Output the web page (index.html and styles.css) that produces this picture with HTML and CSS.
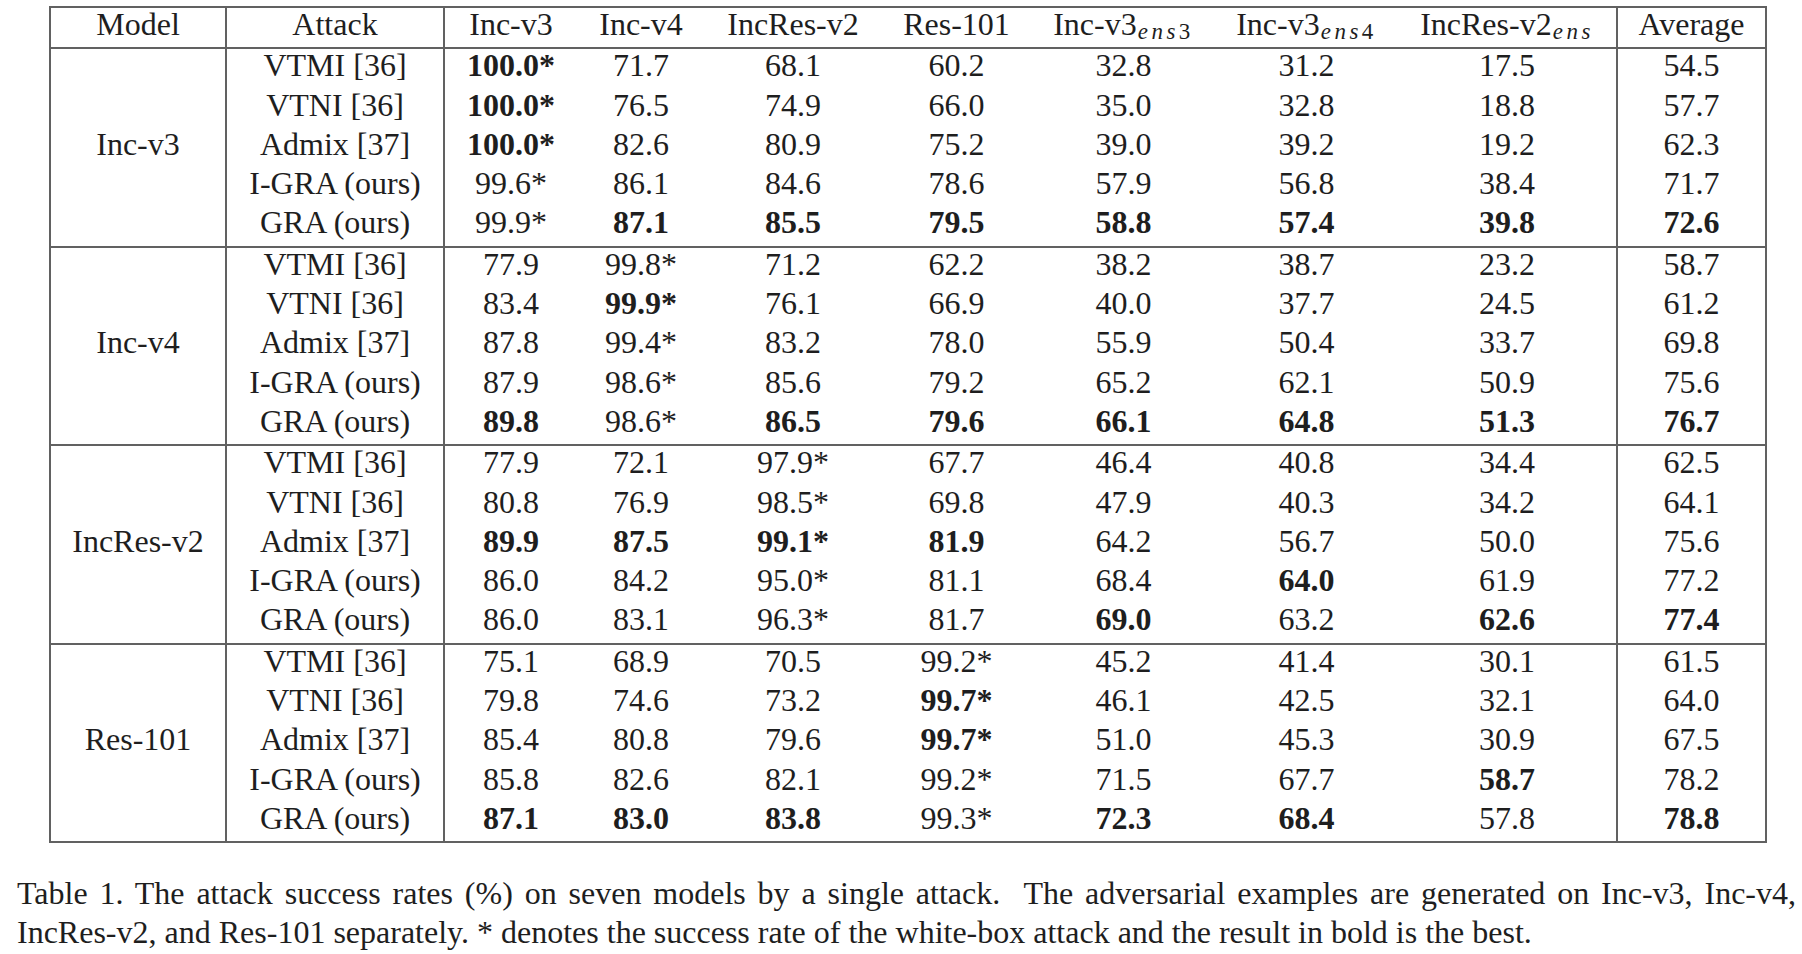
FILE: index.html
```html
<!DOCTYPE html>
<html lang="en">
<head>
<meta charset="utf-8">
<title>Table 1</title>
<link rel="stylesheet" href="styles.css">
</head>
<body>
<div class="page">
  <table class="results">
    <colgroup>
      <col class="c-model">
      <col class="c-attack">
      <col class="c-v3">
      <col class="c-v4">
      <col class="c-ir">
      <col class="c-res">
      <col class="c-e3">
      <col class="c-e4">
      <col class="c-iens">
      <col class="c-avg">
    </colgroup>
    <thead>
      <tr>
        <th>Model</th>
        <th>Attack</th>
        <th>Inc-v3</th>
        <th>Inc-v4</th>
        <th>IncRes-v2</th>
        <th>Res-101</th>
        <th>Inc-v3<span class="sub"><i>ens</i>3</span></th>
        <th>Inc-v3<span class="sub"><i>ens</i>4</span></th>
        <th>IncRes-v2<span class="sub"><i>ens</i></span></th>
        <th>Average</th>
      </tr>
    </thead>
    <tbody>
      <tr><td rowspan="5">Inc-v3</td><td>VTMI [36]</td><td class="b">100.0*</td><td>71.7</td><td>68.1</td><td>60.2</td><td>32.8</td><td>31.2</td><td>17.5</td><td>54.5</td></tr>
      <tr><td>VTNI [36]</td><td class="b">100.0*</td><td>76.5</td><td>74.9</td><td>66.0</td><td>35.0</td><td>32.8</td><td>18.8</td><td>57.7</td></tr>
      <tr><td>Admix [37]</td><td class="b">100.0*</td><td>82.6</td><td>80.9</td><td>75.2</td><td>39.0</td><td>39.2</td><td>19.2</td><td>62.3</td></tr>
      <tr><td>I-GRA (ours)</td><td>99.6*</td><td>86.1</td><td>84.6</td><td>78.6</td><td>57.9</td><td>56.8</td><td>38.4</td><td>71.7</td></tr>
      <tr><td>GRA (ours)</td><td>99.9*</td><td class="b">87.1</td><td class="b">85.5</td><td class="b">79.5</td><td class="b">58.8</td><td class="b">57.4</td><td class="b">39.8</td><td class="b">72.6</td></tr>
    </tbody>
    <tbody>
      <tr><td rowspan="5">Inc-v4</td><td>VTMI [36]</td><td>77.9</td><td>99.8*</td><td>71.2</td><td>62.2</td><td>38.2</td><td>38.7</td><td>23.2</td><td>58.7</td></tr>
      <tr><td>VTNI [36]</td><td>83.4</td><td class="b">99.9*</td><td>76.1</td><td>66.9</td><td>40.0</td><td>37.7</td><td>24.5</td><td>61.2</td></tr>
      <tr><td>Admix [37]</td><td>87.8</td><td>99.4*</td><td>83.2</td><td>78.0</td><td>55.9</td><td>50.4</td><td>33.7</td><td>69.8</td></tr>
      <tr><td>I-GRA (ours)</td><td>87.9</td><td>98.6*</td><td>85.6</td><td>79.2</td><td>65.2</td><td>62.1</td><td>50.9</td><td>75.6</td></tr>
      <tr><td>GRA (ours)</td><td class="b">89.8</td><td>98.6*</td><td class="b">86.5</td><td class="b">79.6</td><td class="b">66.1</td><td class="b">64.8</td><td class="b">51.3</td><td class="b">76.7</td></tr>
    </tbody>
    <tbody>
      <tr><td rowspan="5">IncRes-v2</td><td>VTMI [36]</td><td>77.9</td><td>72.1</td><td>97.9*</td><td>67.7</td><td>46.4</td><td>40.8</td><td>34.4</td><td>62.5</td></tr>
      <tr><td>VTNI [36]</td><td>80.8</td><td>76.9</td><td>98.5*</td><td>69.8</td><td>47.9</td><td>40.3</td><td>34.2</td><td>64.1</td></tr>
      <tr><td>Admix [37]</td><td class="b">89.9</td><td class="b">87.5</td><td class="b">99.1*</td><td class="b">81.9</td><td>64.2</td><td>56.7</td><td>50.0</td><td>75.6</td></tr>
      <tr><td>I-GRA (ours)</td><td>86.0</td><td>84.2</td><td>95.0*</td><td>81.1</td><td>68.4</td><td class="b">64.0</td><td>61.9</td><td>77.2</td></tr>
      <tr><td>GRA (ours)</td><td>86.0</td><td>83.1</td><td>96.3*</td><td>81.7</td><td class="b">69.0</td><td>63.2</td><td class="b">62.6</td><td class="b">77.4</td></tr>
    </tbody>
    <tbody>
      <tr><td rowspan="5">Res-101</td><td>VTMI [36]</td><td>75.1</td><td>68.9</td><td>70.5</td><td>99.2*</td><td>45.2</td><td>41.4</td><td>30.1</td><td>61.5</td></tr>
      <tr><td>VTNI [36]</td><td>79.8</td><td>74.6</td><td>73.2</td><td class="b">99.7*</td><td>46.1</td><td>42.5</td><td>32.1</td><td>64.0</td></tr>
      <tr><td>Admix [37]</td><td>85.4</td><td>80.8</td><td>79.6</td><td class="b">99.7*</td><td>51.0</td><td>45.3</td><td>30.9</td><td>67.5</td></tr>
      <tr><td>I-GRA (ours)</td><td>85.8</td><td>82.6</td><td>82.1</td><td>99.2*</td><td>71.5</td><td>67.7</td><td class="b">58.7</td><td>78.2</td></tr>
      <tr><td>GRA (ours)</td><td class="b">87.1</td><td class="b">83.0</td><td class="b">83.8</td><td>99.3*</td><td class="b">72.3</td><td class="b">68.4</td><td>57.8</td><td class="b">78.8</td></tr>
    </tbody>
  </table>
  <p class="caption">Table 1. The attack success rates (%) on seven models by a single attack.&nbsp; The adversarial examples are generated on Inc-v3, Inc-v4, IncRes-v2, and Res-101 separately. * denotes the success rate of the white-box attack and the result in bold is the best.</p>
</div>
</body>
</html>
```

FILE: styles.css
```css
html, body {
  margin: 0;
  padding: 0;
  background: #ffffff;
}

body {
  font-family: "Liberation Serif", "Times New Roman", serif;
  color: #1e1e1e;
}

.page {
  padding: 6px 0 0 0;
}

.results {
  margin-left: 49px;
  border-collapse: collapse;
  table-layout: fixed;
  width: 1716px;
  font-size: 32px;
  border: 2px solid #616161;
}

.results th,
.results td {
  padding: 0 0 5.5px 0;
  line-height: 33.8px;
  text-align: center;
  vertical-align: middle;
  font-weight: normal;
  white-space: nowrap;
}

.results thead {
  border-bottom: 2px solid #616161;
}

.results tbody {
  border-top: 2px solid #616161;
}

.results .b {
  font-weight: bold;
}

.c-model { width: 176px; border-right: 2px solid #616161; }
.c-attack { width: 218px; border-right: 2px solid #616161; }
.c-v3 { width: 133px; }
.c-v4 { width: 128px; }
.c-ir { width: 176px; }
.c-res { width: 151px; }
.c-e3 { width: 183px; }
.c-e4 { width: 183px; }
.c-iens { width: 219px; border-right: 2px solid #616161; }
.c-avg { width: 149px; }

.sub {
  font-size: 23px;
  line-height: 0;
  letter-spacing: 3.5px;
  vertical-align: -4px;
  margin-left: 1px;
}

.sub i {
  font-style: italic;
}

.caption {
  margin: 31px 0 0 17px;
  width: 1779px;
  font-size: 32px;
  line-height: 39px;
  text-align: justify;
}
```
